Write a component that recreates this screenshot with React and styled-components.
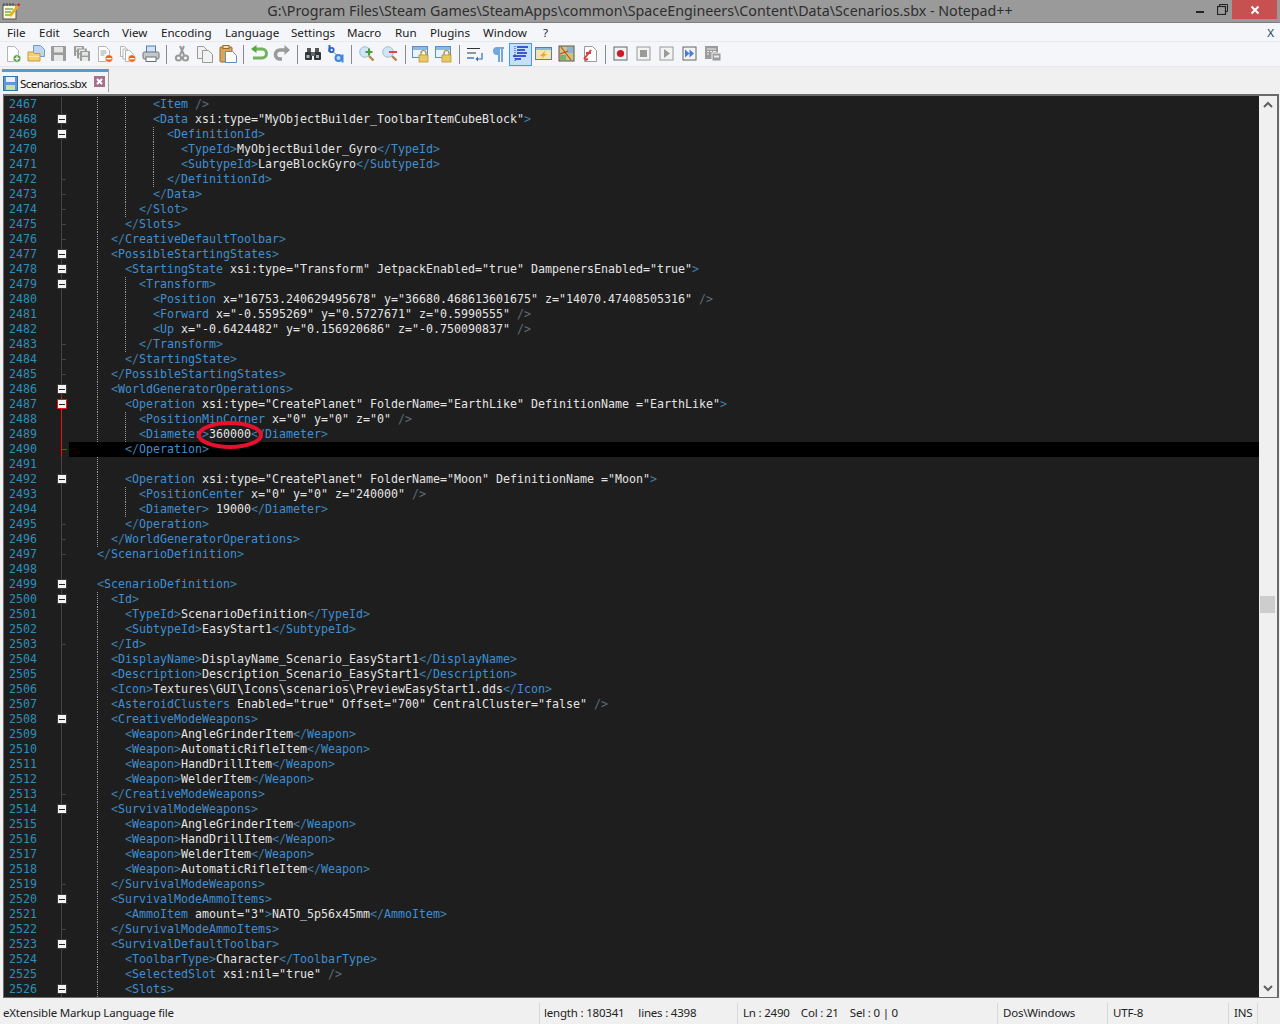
import React from "react";
import styled, { createGlobalStyle } from "styled-components";

const GlobalStyle = createGlobalStyle`
  html, body { margin: 0; padding: 0; background: #f0f0f0; overflow: hidden; }
  * { box-sizing: border-box; }
`;

const uiFont = `"Noto Sans", "Open Sans", sans-serif`;

const Window = styled.div`
  width: 1280px;
  height: 1024px;
  display: flex;
  flex-direction: column;
  position: relative;
  overflow: hidden;
  font-family: ${uiFont};
  background: #f0f0f0;
`;

const TitleBar = styled.div`
  height: 23px;
  flex: none;
  display: flex;
  align-items: flex-start;
  background: #9a9a9a;
  border-bottom: 1px solid #7d7d7d;
`;

const AppIcon = styled.svg`
  flex: none;
  width: 18px;
  height: 18px;
  margin: 2px 0 0 2px;
`;

const Title = styled.div`
  flex: 1;
  text-align: center;
  font-size: 14.25px;
  line-height: 22px;
  color: #2e2e2e;
  padding-left: 73px;
  white-space: nowrap;
`;

const WinButtons = styled.div`
  flex: none;
  display: flex;
  align-items: flex-start;
  margin-right: 3px;
`;

const WinButton = styled.div`
  width: ${(p) => p.$w}px;
  height: 19px;
  display: flex;
  align-items: center;
  justify-content: center;
  background: ${(p) => (p.$close ? "#c75050" : "transparent")};
`;

const MenuBar = styled.div`
  height: 19px;
  flex: none;
  display: flex;
  align-items: center;
  padding-left: 7px;
  background: #f5f6f9;
  border-bottom: 1px solid #e8e9ec;
  font-size: 11.6px;
  color: #1a1a1a;
`;

const MenuItem = styled.div`
  width: ${(p) => p.$w}px;
  flex: none;
  white-space: nowrap;
`;

const MenuClose = styled.div`
  margin-left: auto;
  margin-right: 6px;
  color: #1a3a6a;
`;

const Toolbar = styled.div`
  height: 25px;
  flex: none;
  display: flex;
  align-items: center;
  padding-left: 1px;
  background: #f5f6f9;
  border-bottom: 1px solid #e6e7ea;
`;

const ToolButton = styled.div`
  width: 23px;
  height: 23px;
  flex: none;
  display: flex;
  align-items: center;
  justify-content: center;
  border: 1px solid ${(p) => (p.$on ? "#3d9bf0" : "transparent")};
  background: ${(p) => (p.$on ? "#c4e0fa" : "transparent")};
`;

const ToolSep = styled.div`
  width: 8px;
  height: 19px;
  flex: none;
  display: flex;
  justify-content: center;

  &::before {
    content: "";
    width: 1px;
    height: 100%;
    background: #8a8a8a;
  }
`;

const TabStrip = styled.div`
  height: 25px;
  flex: none;
  display: flex;
  align-items: flex-end;
  padding-left: 2px;
  background: #f0f0f0;
`;

const Tab = styled.div`
  width: 107px;
  height: 23px;
  display: flex;
  align-items: center;
  gap: 2px;
  padding: 3px 0 0 1px;
  background: #f4f4f4;
  border-top: 3px solid #4b9fd8;
  border-right: 1px solid #a0a0a0;
  font-size: 11.5px;
  letter-spacing: -0.55px;
  color: #111;
`;

const TabLabel = styled.span`
  flex: 1;
  white-space: nowrap;
`;

const TabClose = styled.svg`
  width: 11px;
  height: 11px;
  margin: 0 3px 4px 0;
`;

const EditorFrame = styled.div`
  flex: none;
  height: 904px;
  margin: 2px 1px 0 3px;
  padding-top: 1px;
  display: flex;
  background: #1e1e1e;
  border: 1px solid #6a6a6a;
  border-width: 2px 2px 1px 1px;
`;

const Lines = styled.div`
  flex: 1;
  min-width: 0;
  overflow: hidden;
  font-family: "DejaVu Sans Mono", monospace;
  font-size: 11.63px;
  line-height: 15px;
`;

const LineRow = styled.div`
  height: 15px;
  display: flex;
`;

const LineNo = styled.div`
  width: 50px;
  flex: none;
  padding-left: 5px;
  color: #2b8fbb;
`;

const FoldCell = styled.div`
  width: 15px;
  flex: none;
  position: relative;
  background: #1e1e1e;

  &::before {
    content: "";
    position: absolute;
    left: 7px;
    top: 0;
    bottom: 0;
    width: 1px;
    background: ${(p) => (p.$red ? "#ee1111" : "#444")};
  }
`;

const FoldTick = styled.div`
  position: absolute;
  left: 7px;
  top: 7px;
  width: ${(p) => (p.$red ? 6 : 5)}px;
  height: 1px;
  background: ${(p) => (p.$red ? "#ee1111" : "#444")};
`;

const FoldBox = styled.div`
  position: absolute;
  left: 3px;
  top: 2px;
  width: 10px;
  height: 10px;
  background: #f2f2f2;
  border: 1px solid ${(p) => (p.$red ? "#ee1111" : "#3a3a3a")};
  display: flex;
  align-items: center;
  justify-content: center;

  &::before {
    content: "";
    width: 6px;
    height: 1px;
    background: #222;
  }
`;

const Code = styled.div`
  flex: 1;
  display: flex;
  white-space: pre;
  background: ${(p) => (p.$active ? "#000" : "transparent")};
`;

const Indent = styled.div`
  flex: none;
  display: flex;
  width: ${(p) => p.$n * 7}px;
`;

const Guide = styled.div`
  flex: none;
  width: 28px;
  height: 15px;
  border-left: ${(p) => (p.$show ? "1px dotted #9a9a9a" : "none")};
`;

const Dim = styled.span`
  color: #3f7fa8;
`;

const Tag = styled.span`
  color: #3f8fd2;
`;

const Slash = styled.span`
  color: #5f6b73;
`;

const Plain = styled.span`
  color: #e4e4e4;
`;

const RedCircle = styled.svg`
  position: absolute;
  left: 196px;
  top: 420px;
  width: 68px;
  height: 30px;
`;

const ScrollBar = styled.div`
  width: 18px;
  flex: none;
  margin-top: -1px;
  display: flex;
  flex-direction: column;
  align-items: center;
  justify-content: space-between;
  background: #f0f0f0;
  position: relative;
`;

const ScrollArrow = styled.svg`
  width: 12px;
  height: 8px;
  margin: 5px 0;
`;

const ScrollThumb = styled.div`
  position: absolute;
  left: 1px;
  top: 500px;
  width: 15px;
  height: 17px;
  background: #cdcdcd;
`;

const StatusBar = styled.div`
  flex: 1;
  margin-top: 3px;
  display: grid;
  grid-template-columns: 540px 198px 260px 110px 121px 29px 1fr;
  align-items: end;
  background: #f0f0f0;
  font-size: 11.5px;
  letter-spacing: -0.2px;
  color: #222;
`;

const StatusCell = styled.div`
  height: 21px;
  line-height: 20px;
  padding-left: ${(p) => p.$pad ?? 5}px;
  border-right: 1px solid #d8d8d8;
  white-space: pre;
`;

// toolbar icons, all in an 18x18 box
const Ico = ({ children }) => (
  <svg width="18" height="18" viewBox="0 0 18 18">
    {children}
  </svg>
);

const Sheet = ({ x = 3, y = 1, w = 11, h = 15, fill = "#fff", stroke = "#b5b5b5" }) => (
  <path
    d={`M${x + 0.5} ${y + 0.5}h${w - 4}l4 4v${h - 4}h-${w}z`}
    fill={fill}
    stroke={stroke}
  />
);

const Badge = ({ color = "#e8641c" }) => (
  <>
    <circle cx="13" cy="13.5" r="3.8" fill={color} stroke="#fff" strokeWidth="0.6" />
    <rect x="10.5" y="13" width="5" height="1.4" fill="#fff" />
  </>
);

const Floppy = ({ x = 1, y = 1, s = 15 }) => (
  <>
    <rect x={x} y={y} width={s} height={s} rx="1" fill="#9c9c9c" />
    <rect x={x + s * 0.2} y={y + 1} width={s * 0.6} height={s * 0.36} fill="#e4e4e4" />
    <rect x={x + s * 0.2} y={y + s * 0.6} width={s * 0.6} height={s * 0.4} fill="#e8e8e8" />
  </>
);

const Magnifier = ({ children }) => (
  <>
    <circle cx="7" cy="7" r="5.3" fill="#cfe6f8" stroke="#a4bdd0" />
    <path d="M11 11l4.5 4.5" stroke="#b5854a" strokeWidth="2.4" />
    {children}
  </>
);

const LockWindow = () => (
  <>
    <rect x="0.5" y="1.5" width="15" height="11" fill="#eaf3fb" stroke="#5a8fc4" />
    <rect x="1" y="2" width="14" height="3" fill="#8fb8e0" />
    <path d="M9 10V8a2.5 2.5 0 015 0v2" fill="none" stroke="#a98a3a" strokeWidth="1.2" />
    <rect x="7" y="10" width="9" height="7" fill="#e8c860" stroke="#b89a3c" strokeWidth="0.8" />
  </>
);

const MacroFrame = ({ children, color = "#777" }) => (
  <>
    <rect x="2" y="2" width="13" height="13" fill="#f3f3f3" stroke={color} strokeWidth="1" />
    {children}
  </>
);

const icons = {
  new: (
    <Ico>
      <Sheet />
      <circle cx="13" cy="13.5" r="3.8" fill="#4c9a3c" stroke="#fff" strokeWidth="0.6" />
      <path d="M10.8 13.5h4.4M13 11.3v4.4" stroke="#fff" strokeWidth="1.3" />
    </Ico>
  ),
  open: (
    <Ico>
      <Sheet x={6} y={0} w={11} h={11} fill="#bcd6f2" stroke="#6f9bd0" />
      <path d="M1 7h5l1.5 1.5H13V16H1z" fill="#f5cf72" stroke="#c99a34" />
      <rect x="1.5" y="11" width="11" height="1" fill="#fbe7ac" />
    </Ico>
  ),
  save: (
    <Ico>
      <Floppy />
    </Ico>
  ),
  saveAll: (
    <Ico>
      <Floppy x={1} y={1} s={10} />
      <Floppy x={4} y={3.5} s={10} />
      <Floppy x={7} y={6} s={10} />
    </Ico>
  ),
  close: (
    <Ico>
      <Sheet x={2} y={1} />
      <path d="M4.5 6h6M4.5 8h6M4.5 10h4" stroke="#a0a0a0" />
      <Badge />
    </Ico>
  ),
  closeAll: (
    <Ico>
      <Sheet x={1} y={1} w={8} h={10} />
      <Sheet x={3.5} y={3.5} w={8} h={10} />
      <Sheet x={6} y={5} w={8} h={11} />
      <Badge />
    </Ico>
  ),
  print: (
    <Ico>
      <rect x="4.5" y="1" width="9" height="7" fill="#cfe2f6" stroke="#4f7fb5" />
      <rect x="1" y="7" width="16" height="7" rx="1.5" fill="#c4c8cc" stroke="#6a7076" />
      <rect x="4" y="12" width="10" height="4.5" fill="#fff" stroke="#6a7076" />
    </Ico>
  ),
  cut: (
    <Ico>
      <path d="M11 1L7 10M7 1l4 9" stroke="#9a9a9a" strokeWidth="2" />
      <circle cx="5.5" cy="13" r="2.6" fill="none" stroke="#9a9a9a" strokeWidth="2" />
      <circle cx="12.5" cy="13" r="2.6" fill="none" stroke="#9a9a9a" strokeWidth="2" />
    </Ico>
  ),
  copy: (
    <Ico>
      <Sheet x={1} y={1} w={10} h={12} fill="#f2f2f2" stroke="#999" />
      <Sheet x={6} y={5} w={10} h={12} fill="#f2f2f2" stroke="#999" />
    </Ico>
  ),
  paste: (
    <Ico>
      <rect x="1" y="2" width="12" height="15" rx="1" fill="#d9a45c" stroke="#9a6a2c" />
      <rect x="4" y="0.5" width="6" height="3" fill="#efe0b8" stroke="#9a6a2c" />
      <Sheet x={6} y={6} w={11} h={11} fill="#fff" stroke="#5a8fc4" />
    </Ico>
  ),
  undo: (
    <Ico>
      <path d="M5 4h7a4.5 4.5 0 010 9H3" fill="none" stroke="#6fb35a" strokeWidth="3" />
      <path d="M6.5 0v8L1 4z" fill="#5aa545" />
    </Ico>
  ),
  redo: (
    <Ico>
      <path d="M13 5H7a4.5 4.5 0 000 9h2" fill="none" stroke="#9a9a9a" strokeWidth="3.6" />
      <path d="M11.5 0v10L17 5z" fill="#9a9a9a" />
    </Ico>
  ),
  find: (
    <Ico>
      <rect x="1" y="7" width="7" height="8" rx="1" fill="#333" />
      <rect x="10" y="7" width="7" height="8" rx="1" fill="#333" />
      <rect x="3" y="3" width="4" height="4" fill="#555" />
      <rect x="11" y="3" width="4" height="4" fill="#555" />
      <rect x="7" y="7" width="4" height="4" fill="#666" />
      <rect x="2.5" y="10" width="3" height="3" fill="#9db8cf" />
      <rect x="12" y="10" width="3" height="3" fill="#9db8cf" />
    </Ico>
  ),
  replace: (
    <Ico>
      <path d="M2.5 0v7" stroke="#2a62c8" strokeWidth="2" />
      <circle cx="4.5" cy="5" r="2.2" fill="none" stroke="#2a62c8" strokeWidth="1.8" />
      <path d="M6 7l4 3" stroke="#7fa060" />
      <circle cx="11.500" cy="13" r="3" fill="#bcd8f4" stroke="#3f86e0" strokeWidth="2" />
      <path d="M15.500 9.500v8" stroke="#3f86e0" strokeWidth="2" />
    </Ico>
  ),
  zoomIn: (
    <Ico>
      <Magnifier>
        <path d="M7.5 7h7M11 3.5v7" stroke="#4c9a3c" strokeWidth="2" />
      </Magnifier>
    </Ico>
  ),
  zoomOut: (
    <Ico>
      <Magnifier>
        <path d="M8 7h8" stroke="#e2444a" strokeWidth="2" />
      </Magnifier>
    </Ico>
  ),
  lock: (
    <Ico>
      <LockWindow />
    </Ico>
  ),
  wrap: (
    <Ico>
      <path d="M1 3.5h13M1 8h9M1 12.5h6" stroke="#333" />
      <path d="M1 13h7" stroke="#6a9ad0" strokeWidth="2" />
      <path d="M16 8v6h-5" fill="none" stroke="#2f6fb0" strokeWidth="1.2" />
      <path d="M12 11.5v5L9.5 14z" fill="#2f6fb0" />
    </Ico>
  ),
  pilcrow: (
    <Ico>
      <path d="M15 2H8a4 4 0 000 8h1v7h2V4h1v13h2V4h1z" fill="#6ea8dc" />
    </Ico>
  ),
  guide: (
    <Ico>
      <path d="M3 1v16" stroke="#1a3ad0" strokeDasharray="1 1" />
      <path d="M5 2h11M5 5h8M5 8h10" stroke="#1428c8" strokeWidth="1.6" />
      <path d="M1 11h13M3 14h6" stroke="#1428c8" strokeWidth="1.4" />
    </Ico>
  ),
  udl: (
    <Ico>
      <rect x="0.5" y="2.5" width="16" height="12" fill="#f4e6a8" stroke="#4f7fb5" />
      <rect x="1" y="3" width="15" height="2" fill="#8fb8e0" />
      <path d="M11 5L5 11h3l-2 3 6-5H9z" fill="#eea820" />
    </Ico>
  ),
  docMap: (
    <Ico>
      <rect x="1" y="1" width="15" height="15" fill="#c8c878" stroke="#555" />
      <rect x="9" y="2" width="6" height="6" fill="#8fb0d8" />
      <rect x="2" y="10" width="6" height="5" fill="#7fb070" />
      <path d="M3 2l10 13M2 9l8-3" stroke="#d04030" strokeWidth="1.2" />
    </Ico>
  ),
  funcList: (
    <Ico>
      <Sheet x={3} y={1} w={12} h={15} stroke="#999" />
      <path d="M3 14l7-9M5 8h5M4 15l3-1" stroke="#d84040" strokeWidth="2" />
    </Ico>
  ),
  rec: (
    <Ico>
      <MacroFrame color="#666">
        <circle cx="8.5" cy="8.5" r="3.6" fill="#d01828" />
      </MacroFrame>
    </Ico>
  ),
  stop: (
    <Ico>
      <MacroFrame color="#999">
        <rect x="5" y="5" width="7" height="7" fill="#9a9a9a" />
      </MacroFrame>
    </Ico>
  ),
  play: (
    <Ico>
      <MacroFrame color="#999">
        <path d="M6 4l6 4.500L6 13z" fill="#9a9a9a" />
      </MacroFrame>
    </Ico>
  ),
  fast: (
    <Ico>
      <MacroFrame color="#666">
        <path d="M4 4.500l4.500 4L4 12.500zM8.500 4.500l4.500 4-4.500 4z" fill="#3f7fd8" />
      </MacroFrame>
    </Ico>
  ),
  saveMacro: (
    <Ico>
      <rect x="1" y="1" width="13" height="13" fill="#9c9c9c" />
      <path d="M3 4h9M3 6.500h2M6 6.500h2M9 6.500h3M3 9h2" stroke="#eee" />
      <rect x="8" y="8" width="9" height="8" fill="#9c9c9c" stroke="#f4f4f4" />
      <rect x="10" y="10.500" width="5" height="2" fill="#eee" />
    </Ico>
  ),
};

const toolbar = [
  "new", "open", "save", "saveAll", "close", "closeAll", "print", "|",
  "cut", "copy", "paste", "|",
  "undo", "redo", "|",
  "find", "replace", "|",
  "zoomIn", "zoomOut", "|",
  "lock", "lock", "|",
  "wrap", "pilcrow", "guide", "udl", "docMap", "funcList", "|",
  "rec", "stop", "play", "fast", "saveMacro",
];

const menus = [
  ["File", 32], ["Edit", 34], ["Search", 49], ["View", 39], ["Encoding", 64], ["Language", 66],
  ["Settings", 56], ["Macro", 48], ["Run", 35], ["Plugins", 53], ["Window", 60], ["?", 12],
];

const source = [
  `            <Item />`,
  `            <Data xsi:type="MyObjectBuilder_ToolbarItemCubeBlock">`,
  `              <DefinitionId>`,
  `                <TypeId>MyObjectBuilder_Gyro</TypeId>`,
  `                <SubtypeId>LargeBlockGyro</SubtypeId>`,
  `              </DefinitionId>`,
  `            </Data>`,
  `          </Slot>`,
  `        </Slots>`,
  `      </CreativeDefaultToolbar>`,
  `      <PossibleStartingStates>`,
  `        <StartingState xsi:type="Transform" JetpackEnabled="true" DampenersEnabled="true">`,
  `          <Transform>`,
  `            <Position x="16753.240629495678" y="36680.468613601675" z="14070.47408505316" />`,
  `            <Forward x="-0.5595269" y="0.5727671" z="0.5990555" />`,
  `            <Up x="-0.6424482" y="0.156920686" z="-0.750090837" />`,
  `          </Transform>`,
  `        </StartingState>`,
  `      </PossibleStartingStates>`,
  `      <WorldGeneratorOperations>`,
  `        <Operation xsi:type="CreatePlanet" FolderName="EarthLike" DefinitionName ="EarthLike">`,
  `          <PositionMinCorner x="0" y="0" z="0" />`,
  `          <Diameter>360000</Diameter>`,
  `        </Operation>`,
  `      `,
  `        <Operation xsi:type="CreatePlanet" FolderName="Moon" DefinitionName ="Moon">`,
  `          <PositionCenter x="0" y="0" z="240000" />`,
  `          <Diameter> 19000</Diameter>`,
  `        </Operation>`,
  `      </WorldGeneratorOperations>`,
  `    </ScenarioDefinition>`,
  ``,
  `    <ScenarioDefinition>`,
  `      <Id>`,
  `        <TypeId>ScenarioDefinition</TypeId>`,
  `        <SubtypeId>EasyStart1</SubtypeId>`,
  `      </Id>`,
  `      <DisplayName>DisplayName_Scenario_EasyStart1</DisplayName>`,
  `      <Description>Description_Scenario_EasyStart1</Description>`,
  `      <Icon>Textures\\GUI\\Icons\\scenarios\\PreviewEasyStart1.dds</Icon>`,
  `      <AsteroidClusters Enabled="true" Offset="700" CentralCluster="false" />`,
  `      <CreativeModeWeapons>`,
  `        <Weapon>AngleGrinderItem</Weapon>`,
  `        <Weapon>AutomaticRifleItem</Weapon>`,
  `        <Weapon>HandDrillItem</Weapon>`,
  `        <Weapon>WelderItem</Weapon>`,
  `      </CreativeModeWeapons>`,
  `      <SurvivalModeWeapons>`,
  `        <Weapon>AngleGrinderItem</Weapon>`,
  `        <Weapon>HandDrillItem</Weapon>`,
  `        <Weapon>WelderItem</Weapon>`,
  `        <Weapon>AutomaticRifleItem</Weapon>`,
  `      </SurvivalModeWeapons>`,
  `      <SurvivalModeAmmoItems>`,
  `        <AmmoItem amount="3">NATO_5p56x45mm</AmmoItem>`,
  `      </SurvivalModeAmmoItems>`,
  `      <SurvivalDefaultToolbar>`,
  `        <ToolbarType>Character</ToolbarType>`,
  `        <SelectedSlot xsi:nil="true" />`,
  `        <Slots>`,
];

const foldOpen = [2468, 2469, 2477, 2478, 2479, 2486, 2487, 2492, 2499, 2500, 2508, 2514, 2520, 2523, 2526];

// splits one xml line into coloured pieces
function colorize(text) {
  const parts = [];
  const re = /(<\/?)([\w]+)([^>]*?)(\/?>)|([^<]+)/g;
  let m;
  let i = 0;
  while ((m = re.exec(text))) {
    if (m[5] !== undefined) {
      parts.push(<Plain key={i++}>{m[5]}</Plain>);
    } else {
      parts.push(<Dim key={i++}>{m[1]}</Dim>);
      parts.push(<Tag key={i++}>{m[2]}</Tag>);
      if (m[3]) parts.push(<Plain key={i++}>{m[3]}</Plain>);
      parts.push(m[4] === "/>" ? <Slash key={i++}>{m[4]}</Slash> : <Dim key={i++}>{m[4]}</Dim>);
    }
  }
  return parts;
}

function CodeLine({ num, text }) {
  const n = text.length - text.trimStart().length;
  const body = text.slice(n);
  const levels = Math.ceil(n / 4);
  const red = num >= 2488 && num <= 2490;
  return (
    <LineRow>
      <LineNo>{num}</LineNo>
      <FoldCell $red={red || num === 2487}>
        {body.startsWith("</") && <FoldTick $red={num === 2490} />}
        {foldOpen.includes(num) && <FoldBox $red={num === 2487} />}
      </FoldCell>
      <Code $active={num === 2490}>
        <Indent $n={n}>
          {Array.from({ length: levels }, (_, k) => (
            <Guide key={k} $show={k > 0 && num !== 2490} />
          ))}
        </Indent>
        <span>{colorize(body)}</span>
      </Code>
    </LineRow>
  );
}

export default function App() {
  return (
    <Window>
      <GlobalStyle />
      <TitleBar>
        <AppIcon viewBox="0 0 18 18">
          <rect x="1" y="3" width="13" height="14" fill="#fbf6d8" stroke="#555" />
          <path d="M2 1v3M5 1v3M8 1v3M11 1v3" stroke="#444" />
          <path d="M3 7h8M3 10h6M3 13h5" stroke="#7ab648" strokeWidth="1.4" />
          <path d="M7 13L15 3l2 1.500L9 15z" fill="#e8b020" />
          <path d="M15 3l2 1.500 1-2-1.500-1.500z" fill="#c8202c" />
        </AppIcon>
        <Title>G:\Program Files\Steam Games\SteamApps\common\SpaceEngineers\Content\Data\Scenarios.sbx - Notepad++</Title>
        <WinButtons>
          <WinButton $w={26}>
            <svg width="9" height="9" viewBox="0 0 9 9">
              <rect x="0" y="6" width="8" height="2" fill="#222" />
            </svg>
          </WinButton>
          <WinButton $w={19}>
            <svg width="11" height="11" viewBox="0 0 11 11">
              <path d="M2.500 2.500V.500h8v7H8" fill="none" stroke="#222" />
              <rect x="0.500" y="2.500" width="8" height="8" fill="none" stroke="#222" strokeWidth="1.200" />
            </svg>
          </WinButton>
          <WinButton $w={45} $close>
            <svg width="10" height="10" viewBox="0 0 10 10">
              <path d="M1.500 1.500l7 7M8.500 1.500l-7 7" stroke="#fff" strokeWidth="2" />
            </svg>
          </WinButton>
        </WinButtons>
      </TitleBar>

      <MenuBar>
        {menus.map(([label, w]) => (
          <MenuItem key={label} $w={w}>
            {label}
          </MenuItem>
        ))}
        <MenuClose>X</MenuClose>
      </MenuBar>

      <Toolbar>
        {toolbar.map((name, i) =>
          name === "|" ? (
            <ToolSep key={i} />
          ) : (
            <ToolButton key={i} $on={name === "guide"}>
              {icons[name]}
            </ToolButton>
          )
        )}
      </Toolbar>

      <TabStrip>
        <Tab>
          <svg width="15" height="15" viewBox="0 0 15 15">
            <rect x="0.500" y="0.500" width="14" height="14" fill="#5a9ad8" stroke="#3a6ea8" />
            <rect x="3" y="1" width="9" height="5" fill="#e8f0f8" />
            <rect x="3" y="9" width="9" height="5" fill="#c8e0a0" />
          </svg>
          <TabLabel>Scenarios.sbx</TabLabel>
          <TabClose viewBox="0 0 11 11">
            <rect width="11" height="11" fill="#a5718f" />
            <path d="M3 3l5 5M8 3l-5 5" stroke="#fff" strokeWidth="2" />
          </TabClose>
        </Tab>
      </TabStrip>

      <EditorFrame>
        <Lines>
          {source.map((text, i) => (
            <CodeLine key={i} num={2467 + i} text={text} />
          ))}
        </Lines>
        <ScrollBar>
          <ScrollArrow viewBox="0 0 12 8">
            <path d="M2 6l4-4 4 4" fill="none" stroke="#606060" strokeWidth="2" />
          </ScrollArrow>
          <ScrollThumb />
          <ScrollArrow viewBox="0 0 12 8">
            <path d="M2 2l4 4 4-4" fill="none" stroke="#606060" strokeWidth="2" />
          </ScrollArrow>
        </ScrollBar>
      </EditorFrame>

      <StatusBar>
        <StatusCell $pad={3}>eXtensible Markup Language file</StatusCell>
        <StatusCell $pad={4}>{"length : 180341     lines : 4398"}</StatusCell>
        <StatusCell>{"Ln : 2490    Col : 21    Sel : 0 | 0"}</StatusCell>
        <StatusCell>Dos\Windows</StatusCell>
        <StatusCell>UTF-8</StatusCell>
        <StatusCell>INS</StatusCell>
      </StatusBar>

      <RedCircle viewBox="0 0 68 30">
        <ellipse cx="34" cy="15" rx="31" ry="12" fill="none" stroke="#e8112d" strokeWidth="4" />
      </RedCircle>
    </Window>
  );
}
